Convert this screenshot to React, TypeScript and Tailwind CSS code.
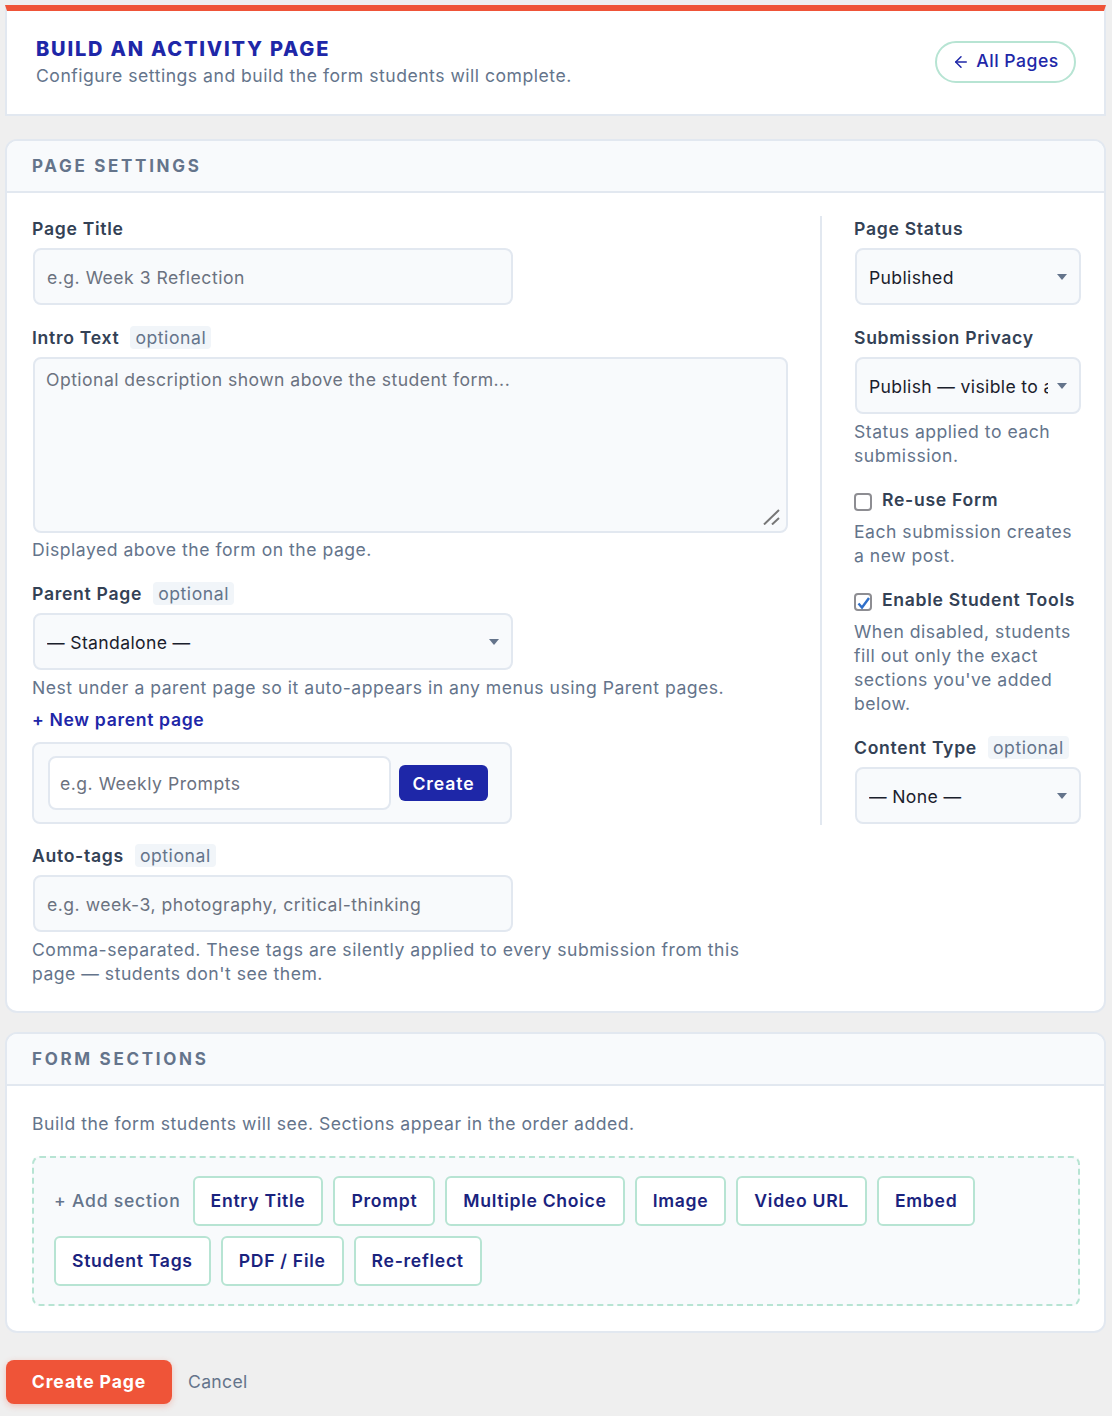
import { ArrowLeft } from "lucide-react";

const fieldClass =
  "block h-[57px] w-[480px] ml-px rounded-lg border-2 border-[#e2e8f0] bg-[#f8fafc] px-3 pt-[2px] text-[#1a202c] outline-none placeholder:text-[#6b7280]";

function Optional() {
  return (
    <span className="ml-[11px] rounded bg-[#f1f5f9] px-[5px] font-normal leading-[23px] tracking-[0.55px] text-[#64748b]">optional</span>
  );
}

function Label({ children, optional }: { children: string; optional?: boolean }) {
  return (
    <div className="flex h-6 items-center font-semibold tracking-[0.7px] text-[#334155]">
      <span className="translate-y-px">{children}</span>
      {optional && <Optional />}
    </div>
  );
}

function Help({ children, className = "" }: { children: string; className?: string }) {
  return <p className={`leading-6 text-[#64748b] ${className}`}>{children}</p>;
}

function Select({ value, className = "" }: { value: string; className?: string }) {
  return (
    <div className={`relative ml-px ${className}`}>
      <select
        defaultValue={value}
        className="block h-[57px] w-full appearance-none rounded-lg border-2 border-[#e2e8f0] bg-[#f8fafc] pl-3 pr-[31px] pt-1 tracking-[0.35px] text-[#1a202c] outline-none"
      >
        <option>{value}</option>
      </select>
      <svg className="absolute right-[14px] top-[26px] h-[6px] w-[10px]" viewBox="0 0 10 6">
        <path d="M0 0h10L5 6z" fill="#64748b" />
      </svg>
    </div>
  );
}

function Checkbox({ label, checked }: { label: string; checked?: boolean }) {
  return (
    <label className="flex h-6 items-center gap-[10px] font-semibold tracking-[0.7px] text-[#334155]">
      <span className="relative h-[18px] w-[18px] translate-y-[3px]">
        <input
          type="checkbox"
          defaultChecked={checked}
          className="block h-[18px] w-[18px] appearance-none rounded-[4px] border-2 border-[#8d8d92] bg-white"
        />
        {checked && (
          <svg className="absolute left-[3px] top-[3px] h-[14px] w-[14px]" viewBox="0 0 14 14" fill="none">
            <path d="M1.5 7.5 5 11.5 12 2" stroke="#2f6fc9" strokeWidth="2.4" />
          </svg>
        )}
      </span>
      <span className="translate-y-px">{label}</span>
    </label>
  );
}

function Card({ title, children }: { title: string; children: React.ReactNode }) {
  return (
    <section className="ml-[5px] mr-[6px] overflow-hidden rounded-xl border-2 border-[#e2e8f0] bg-white">
      <div className="flex h-[52px] items-center border-b-2 border-[#e2e8f0] bg-[#f8fafc] px-[25px] pt-px text-[17px] font-bold uppercase tracking-[2.7px] text-[#64748b]">
        {title}
      </div>
      {children}
    </section>
  );
}

const sectionTypes = ["Entry Title", "Prompt", "Multiple Choice", "Image", "Video URL", "Embed", "Student Tags", "PDF / File", "Re-reflect"];

export default function App() {
  return (
    <div
      className="min-h-[1416px] bg-[#efefef] pt-[5px] text-[17.6px] tracking-[0.5px]"
      style={{ fontFamily: "Inter, sans-serif" }}
    >
      <header className="ml-[5px] mr-[6px] flex h-[111px] items-center justify-between border-x-2 border-b-2 border-t-[6px] border-x-[#e2e8f0] border-b-[#e2e8f0] border-t-[#ef5438] bg-white pl-[29px] pr-[28px]">
        <div className="-mt-[2px]">
          <h1 className="mb-px text-[20px] font-extrabold uppercase leading-7 tracking-[1.8px] text-[#1e27a8]">Build an Activity Page</h1>
          <p className="leading-6 text-[#64748b]">Configure settings and build the form students will complete.</p>
        </div>
        <a className="-mt-[2px] flex h-[42px] w-[141px] items-center justify-center gap-[6px] rounded-full border-2 border-[#b7e4d3] font-medium text-[#1e27a8]">
          <ArrowLeft size={18} strokeWidth={2} />
          All Pages
        </a>
      </header>

      <div className="mt-[23px]">
        <Card title="Page Settings">
          <div className="grid grid-cols-[756px_261px] gap-x-8 pb-[25px] pl-[25px] pt-[23px]">
            <div>
              <Label>Page Title</Label>
              <input className={`${fieldClass} mt-2`} placeholder="e.g. Week 3 Reflection" />

              <div className="mt-5"><Label optional>Intro Text</Label></div>
              <div className="relative mt-2 ml-px w-[755px]">
                <textarea
                  className="block h-[176px] w-full resize-none rounded-lg border-2 border-[#e2e8f0] bg-[#f8fafc] px-[11px] py-2 tracking-[0.45px] outline-none placeholder:text-[#6b7280]"
                  placeholder="Optional description shown above the student form..."
                />
                <svg className="absolute bottom-[8px] right-[8px] h-[16px] w-[17px]" viewBox="0 0 17 16" fill="none">
                  <path d="M1 15.5 16 1M9 15.5 16 9" stroke="#777" strokeWidth="2" />
                </svg>
              </div>
              <Help className="mt-[5px]">Displayed above the form on the page.</Help>

              <div className="mt-[19px]"><Label optional>Parent Page</Label></div>
              <Select value="— Standalone —" className="mt-2 w-[480px]" />
              <Help className="mt-[6px]">Nest under a parent page so it auto-appears in any menus using Parent pages.</Help>
              <a className="mt-2 block font-semibold leading-6 tracking-[0.65px] text-[#1e27a8]">+ New parent page</a>

              <div className="mt-[10px] flex h-[82px] w-[480px] items-center gap-2 rounded-lg border-2 border-[#e2e8f0] bg-[#f8fafc] pl-[14px]">
                <input
                  className="h-[54px] w-[343px] rounded-lg border-2 border-[#e2e8f0] bg-white px-[10px] outline-none placeholder:text-[#6b7280]"
                  placeholder="e.g. Weekly Prompts"
                />
                <button className="h-9 w-[89px] rounded-md bg-[#1e27a8] pt-[2px] font-semibold tracking-[0.9px] text-white">Create</button>
              </div>

              <div className="mt-[19px]"><Label optional>Auto-tags</Label></div>
              <input className={`${fieldClass} mt-2`} placeholder="e.g. week-3, photography, critical-thinking" />
              <Help className="mt-[6px]">Comma-separated. These tags are silently applied to every submission from this page — students don't see them.</Help>
            </div>

            <aside className="h-[609px] self-start border-l-2 border-[#e2e8f0] pl-8">
              <Label>Page Status</Label>
              <Select value="Published" className="mt-2" />

              <div className="mt-5"><Label>Submission Privacy</Label></div>
              <Select value="Publish — visible to all" className="mt-2" />
              <Help className="mt-[6px]">Status applied to each submission.</Help>

              <div className="mt-[19px]"><Checkbox label="Re-use Form" /></div>
              <Help className="mt-[9px]">Each submission creates a new post.</Help>

              <div className="mt-[19px]"><Checkbox label="Enable Student Tools" checked /></div>
              <Help className="mt-[9px]">When disabled, students fill out only the exact sections you've added below.</Help>

              <div className="mt-[19px]"><Label optional>Content Type</Label></div>
              <Select value="— None —" className="mt-2" />
            </aside>
          </div>
        </Card>
      </div>

      <div className="mt-[19px]">
        <Card title="Form Sections">
          <div className="px-[25px] pb-[25px] pt-[26px]">
            <Help>Build the form students will see. Sections appear in the order added.</Help>
            <div className="mt-5 flex h-[150px] w-[1048px] flex-wrap content-start items-center gap-[10px] rounded-lg border-2 border-dashed border-[#b7e4d3] bg-[#f8fafc] px-5 pt-[18px]">
              <span className="mr-[2px] font-medium tracking-[0.75px] text-[#64748b]">+ Add section</span>
              {sectionTypes.map((s) => (
                <button key={s} className="h-[50px] rounded-md border-2 border-[#b7e4d3] bg-white px-4 pt-px font-semibold tracking-[0.7px] text-[#1a237e]">
                  {s}
                </button>
              ))}
            </div>
          </div>
        </Card>
      </div>

      <div className="ml-[6px] mt-[27px] flex items-center gap-4">
        <button className="h-11 w-[166px] rounded-lg bg-[#ef5438] font-bold tracking-[0.9px] text-white shadow-[0_2px_6px_rgba(239,84,56,0.3)]">Create Page</button>
        <a className="tracking-[0.3px] text-[#64748b]">Cancel</a>
      </div>
    </div>
  );
}
